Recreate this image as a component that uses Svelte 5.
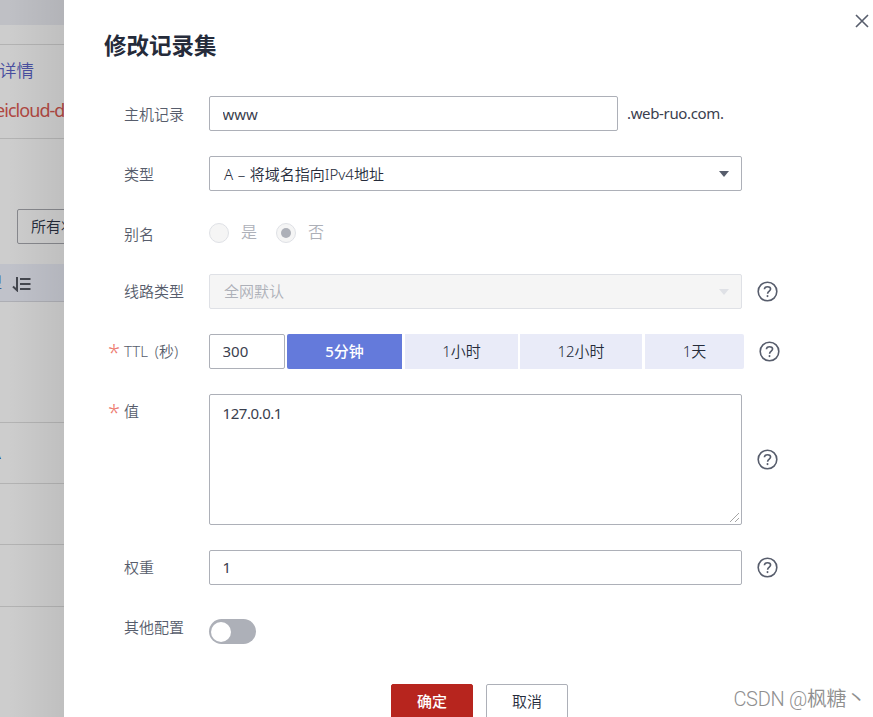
<script lang="ts">
  interface TtlOption {
    readonly label: string;
    readonly seconds: number;
    readonly width: number;
    readonly gap: number;
  }

  const ttlOptions: readonly TtlOption[] = [
    { label: "5分钟", seconds: 300, width: 115, gap: 2 },
    { label: "1小时", seconds: 3600, width: 113, gap: 3 },
    { label: "12小时", seconds: 43200, width: 122, gap: 2 },
    { label: "1天", seconds: 86400, width: 99, gap: 3 },
  ];

  let host = $state("www");
  let ttl = $state(300);
  let value = $state("127.0.0.1");
  let weight = $state("1");
  let showMore = $state(false);
</script>

{#snippet help()}
  <svg class="help" viewBox="0 0 21 21" width="21" height="21" aria-hidden="true">
    <circle cx="10.5" cy="10.5" r="9.3" />
    <path d="M7.4 8.3C7.5 6.5 8.7 5.7 10.5 5.7s3.1.9 3.1 2.4c0 1.9-3 2.1-3 4.6" />
    <path d="M10.5 14.1v2" />
  </svg>
{/snippet}

<div class="page">
  <aside class="backdrop">
    <div class="topbar"></div>
    <div class="strip"></div>
    <div class="notice">
      <span class="link">详情</span>
      <span class="warn">eicloud-d</span>
    </div>
    <div class="toolbar"><span class="filter">所有状</span></div>
    <div class="thead">
      <span class="col">型</span>
      <svg viewBox="0 0 20 16" width="20" height="16" aria-hidden="true">
        <path d="M5 1v13.2L1 10.4M8 3H18.5M8 8H18.5M8 13H18.5" />
      </svg>
    </div>
    <div class="line tall"></div>
    <div class="line record"><span>A</span></div>
    <div class="line"></div>
    <div class="line last"></div>
  </aside>

  <main class="drawer">
    <header>
      <h1>修改记录集</h1>
      <button class="close" aria-label="关闭">
        <svg viewBox="0 0 14 14" width="14" height="14"><path d="M1 1l12 12M13 1L1 13" /></svg>
      </button>
    </header>

    <div class="row">
      <label for="host">主机记录</label>
      <input id="host" class="host" bind:value={host} />
      <span class="suffix">.web-ruo.com.</span>
    </div>

    <div class="row">
      <span class="label">类型</span>
      <div class="select"><span>A – 将域名指向IPv4地址</span><i class="caret"></i></div>
    </div>

    <div class="row alias">
      <span class="label">别名</span>
      <span class="radio"></span>
      <span class="option first">是</span>
      <span class="radio checked"></span>
      <span class="option">否</span>
    </div>

    <div class="row raised">
      <span class="label">线路类型</span>
      <div class="select disabled"><span>全网默认</span><i class="caret"></i></div>
      {@render help()}
    </div>

    <div class="row raised">
      <label for="ttl" class="required">TTL (秒)</label>
      <input id="ttl" class="ttl" bind:value={ttl} />
      {#each ttlOptions as option}
        <button
          class="preset"
          class:active={ttl === option.seconds}
          style="width: {option.width}px; margin-left: {option.gap}px"
          onclick={() => (ttl = option.seconds)}
        >{option.label}</button>
      {/each}
      {@render help()}
    </div>

    <div class="row raised value">
      <label for="value" class="required">值</label>
      <textarea id="value" bind:value></textarea>
      {@render help()}
    </div>

    <div class="row raised">
      <label for="weight">权重</label>
      <input id="weight" class="weight" bind:value={weight} />
      {@render help()}
    </div>

    <div class="row more">
      <span class="label">其他配置</span>
      <button
        class="toggle"
        class:on={showMore}
        aria-label="其他配置"
        onclick={() => (showMore = !showMore)}
      ></button>
    </div>

    <footer>
      <button class="primary">确定</button>
      <button>取消</button>
    </footer>

    <span class="watermark">CSDN @枫糖丶</span>
  </main>
</div>

<style>
  :global(body) {
    margin: 0;
    overflow: hidden;
  }

  .page {
    display: flex;
    width: 873px;
    height: 717px;
    overflow: hidden;
    font-family: "Noto Sans", "Noto Sans CJK SC", sans-serif;
    font-size: 15px;
    font-weight: 350;
    line-height: 20px;
    color: #252b3a;
    background: #fff;
  }

  .page * {
    box-sizing: border-box;
  }

  button,
  input,
  textarea {
    margin: 0;
    font: inherit;
    color: inherit;
  }

  .backdrop {
    position: relative;
    flex: none;
    width: 64px;
    overflow: hidden;
    white-space: nowrap;
    background: #cdcdcd;
  }

  /* shadow cast by the drawer */
  .backdrop::after {
    content: "";
    position: absolute;
    inset: 0;
    background: linear-gradient(to right, transparent 8px, rgba(0, 0, 0, 0.065));
  }

  .topbar {
    height: 25px;
    background: #bfc0c5;
  }

  .strip {
    height: 20px;
    border-bottom: 1px solid #b3b3b3;
  }

  .notice {
    display: flex;
    flex-direction: column;
    height: 94px;
    padding-top: 15px;
    gap: 20px;
    border-bottom: 1px solid #b3b3b3;
    font-size: 17.5px;
  }

  .link {
    margin-left: -1px;
    color: #494fa0;
  }

  .warn {
    margin-left: -5px;
    font-size: 18px;
    font-weight: 400;
    letter-spacing: -0.95px;
    color: #b04842;
  }

  .toolbar {
    height: 125px;
    padding: 70px 0 0 17px;
  }

  .filter {
    display: block;
    width: 100px;
    height: 35px;
    padding: 6px 0 0 13px;
    border: 1px solid #87888d;
    border-radius: 2px;
  }

  .thead {
    display: flex;
    align-items: center;
    height: 38px;
    border-bottom: 1px solid #adaeb4;
    background: #c0c2ca;
  }

  .col {
    margin: -2px 0 0 -13px;
    color: #3c5f93;
  }

  .thead svg {
    margin: 2px 0 0 10px;
    fill: none;
    stroke: #44474f;
    stroke-width: 2;
  }

  .line {
    height: 61px;
    border-bottom: 1px solid #b3b3b3;
  }

  .tall {
    height: 121px;
  }

  .last {
    height: 62px;
  }

  .record {
    padding-top: 20px;
  }

  .record span {
    margin-left: -9px;
    font-weight: 500;
    color: #16366a;
  }

  .drawer {
    position: relative;
    flex: 1;
    padding: 0 40px;
  }

  header {
    display: flex;
    justify-content: space-between;
    height: 96px;
  }

  h1 {
    margin: 31px 0 0;
    font-size: 22.5px;
    line-height: 30px;
    font-weight: 700;
  }

  .close {
    width: 14px;
    height: 14px;
    margin: 14px -36px 0 0;
    padding: 0;
    border: 0;
    background: none;
  }

  .close svg {
    display: block;
    fill: none;
    stroke: #575d6c;
    stroke-width: 1.6;
  }

  .row {
    display: flex;
    align-items: center;
    height: 35px;
    margin-bottom: 25px;
  }

  label,
  .label {
    position: relative;
    flex: none;
    width: 105px;
    padding-left: 20px;
    word-spacing: 3px;
    color: #575d6c;
  }

  .raised label,
  .raised .label,
  .raised .select span {
    padding-bottom: 2px;
  }

  .required::before {
    content: "*";
    position: absolute;
    left: 4px;
    top: 3px;
    font-size: 22px;
    line-height: 14px;
    color: #ed7b70;
  }

  input,
  textarea,
  .select {
    flex: none;
    width: 533px;
    height: 35px;
    padding: 0 12.5px;
    border: 1px solid #adb0b8;
    border-radius: 2px;
    background: #fff;
    outline: none;
  }

  input,
  textarea,
  .suffix {
    font-weight: 400;
    color: #3a404e;
  }

  .host {
    width: 409px;
  }

  .suffix {
    margin-left: 9px;
    padding-bottom: 2px;
    letter-spacing: -0.35px;
  }

  .select {
    display: flex;
    align-items: center;
    justify-content: space-between;
    padding: 0 12px 0 14px;
    word-spacing: 0.7px;
  }

  .caret {
    width: 0;
    border: 5px solid transparent;
    border-top: 6px solid #575d6c;
    border-bottom: 0;
  }

  .select.disabled {
    border-color: #dfe1e6;
    color: #adb0b8;
    background: #f5f5f5;
  }

  .disabled .caret {
    border-top-color: #dfe1e6;
  }

  .alias {
    height: 33px;
    color: #adb0b8;
  }

  .alias .label {
    padding-top: 2px;
  }

  .radio {
    display: grid;
    place-items: center;
    width: 20px;
    height: 20px;
    border: 1px solid #dfe1e6;
    border-radius: 50%;
    background: #f5f5f5;
  }

  .checked::after {
    content: "";
    width: 10px;
    height: 10px;
    border-radius: 50%;
    background: #adb0b8;
  }

  .option {
    margin-left: 12px;
    padding-bottom: 2px;
    font-size: 16px;
  }

  .option.first {
    margin-right: 19px;
  }

  .help {
    flex: none;
    margin-left: 15px;
    fill: none;
    stroke: #575d6c;
    stroke-width: 1.6;
  }

  .ttl {
    width: 76px;
    padding-bottom: 2px;
  }

  .weight {
    padding-bottom: 1px;
  }

  .preset {
    flex: none;
    height: 35px;
    padding: 0 0 2px;
    border: 0;
    background: #e9ebf8;
  }

  .preset.active {
    border-radius: 2px 0 0 2px;
    font-weight: 500;
    color: #fff;
    background: #647adb;
  }

  .preset:last-of-type {
    border-radius: 0 2px 2px 0;
  }

  .value {
    height: 131px;
  }

  .value label {
    align-self: flex-start;
    margin-top: 7px;
  }

  textarea {
    height: 131px;
    padding: 8px 12.5px;
    resize: vertical;
    letter-spacing: -0.45px;
  }

  textarea::-webkit-resizer {
    background: linear-gradient(
        135deg,
        transparent 46%,
        #a5a5a5 46%,
        #a5a5a5 53%,
        transparent 53%,
        transparent 76%,
        #a5a5a5 76%,
        #a5a5a5 83%,
        transparent 83%
      )
      4px 4px / 9px 9px no-repeat;
  }

  .more {
    align-items: flex-start;
    height: 34px;
    margin-bottom: 40px;
    padding-top: 7px;
  }

  .toggle {
    width: 47px;
    height: 25px;
    margin-top: 2px;
    padding: 2px;
    border: 0;
    border-radius: 13px;
    background: #adb0b8;
  }

  .toggle::before {
    content: "";
    display: block;
    width: 20px;
    height: 20px;
    border-radius: 50%;
    background: #fff;
  }

  .toggle.on::before {
    margin-left: auto;
  }

  footer {
    display: flex;
    gap: 13px;
    padding-left: 287px;
  }

  footer button {
    width: 82px;
    height: 35px;
    padding: 0 0 2px;
    border: 1px solid #adb0b8;
    border-radius: 2px;
    background: #fff;
  }

  footer .primary {
    border-color: #b7251e;
    font-weight: 500;
    color: #fff;
    background: #b7251e;
  }

  .watermark {
    position: absolute;
    right: 7px;
    bottom: 8px;
    font-family: Roboto, "Noto Sans CJK SC", sans-serif;
    font-size: 20px;
    letter-spacing: -0.3px;
    color: #8f8f8f;
    white-space: nowrap;
  }
</style>
